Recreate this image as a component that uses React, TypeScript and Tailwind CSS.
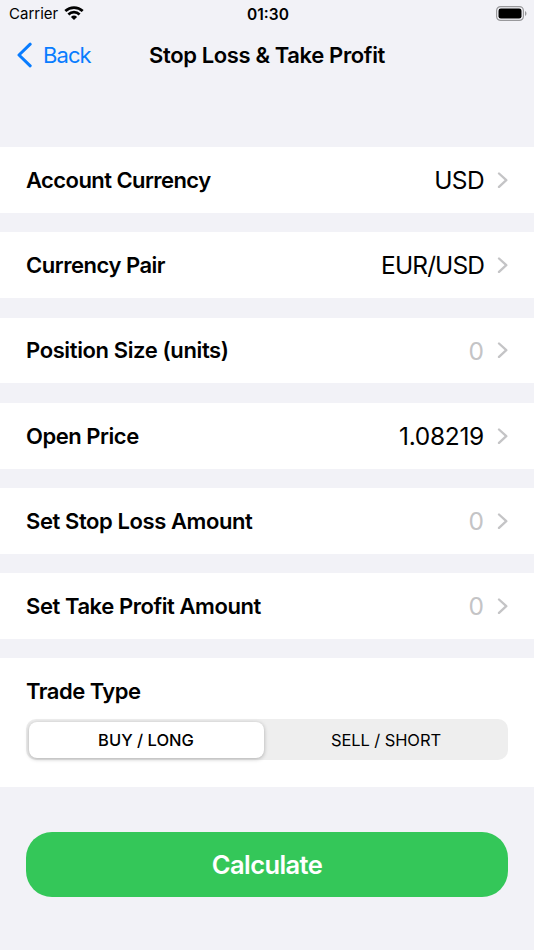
type Row = {
  label: string
  value: string
  labelClass: string
  valueClass: string
}

const rows: Row[] = [
  { label: "Account Currency", value: "USD", labelClass: "tracking-[-0.57px]", valueClass: "tracking-[-0.6px]" },
  { label: "Currency Pair", value: "EUR/USD", labelClass: "tracking-[-0.48px]", valueClass: "tracking-[-0.9px]" },
  { label: "Position Size (units)", value: "0", labelClass: "tracking-[-0.38px]", valueClass: "text-[#c4c4c6]" },
  { label: "Open Price", value: "1.08219", labelClass: "tracking-[-0.46px]", valueClass: "tracking-[-0.3px]" },
  { label: "Set Stop Loss Amount", value: "0", labelClass: "tracking-[-0.41px]", valueClass: "text-[#c4c4c6]" },
  { label: "Set Take Profit Amount", value: "0", labelClass: "tracking-[-0.43px]", valueClass: "text-[#c4c4c6]" },
]

function Chevron() {
  return (
    <svg className="h-4 w-[11px]" viewBox="0 0 11 16" fill="none">
      <path d="M2 1.5 9.3 8.2l-7.3 6.7" stroke="#c4c4c6" strokeWidth="2.3" strokeLinecap="round" strokeLinejoin="round" />
    </svg>
  )
}

function StatusBar() {
  return (
    <div className="grid h-7 grid-cols-3 items-center pl-[9px] pr-[7px]">
      <div className="flex items-center gap-[6px]">
        <span className="text-[15px]">Carrier</span>
        <svg className="h-[14px] w-5 -translate-y-px" viewBox="0 0 20 14" fill="none" stroke="black" strokeWidth="2.7">
          <path d="M1.3 5.1a12.7 12.7 0 0 1 17.4 0M4.4 8.4a8.1 8.1 0 0 1 11.2 0" />
          <path d="M6.9 10.9a4.5 4.5 0 0 1 6.2 0L10 14z" fill="black" stroke="none" />
        </svg>
      </div>
      <span className="pt-px text-center text-[15.5px] font-semibold">01:30</span>
      <svg className="h-[15px] w-[31px] -translate-y-px justify-self-end" viewBox="0 0 31 15">
        <rect x=".6" y=".6" width="26.8" height="13.8" rx="4" fill="none" stroke="#99999c" strokeWidth="1.2" />
        <rect x="2.5" y="2.5" width="23" height="10" rx="2.3" />
        <path d="M29 5c2 1 2 4 0 5z" fill="#99999c" />
      </svg>
    </div>
  )
}

export default function App() {
  return (
    <div className="h-[950px] w-[534px] overflow-hidden bg-[#f2f2f7] font-['Inter',sans-serif] text-black">
      <StatusBar />
      <header className="grid h-[53px] grid-cols-[1fr_auto_1fr] items-center px-4">
        <button className="flex items-center gap-[11px] text-[22px] tracking-[-0.9px] text-[#087cff]">
          <svg className="h-[26px] w-4" viewBox="0 0 16 26" fill="none">
            <path d="M14.2 2.2 3 13l11.2 10.8" stroke="currentColor" strokeWidth="3" strokeLinecap="round" strokeLinejoin="round" />
          </svg>
          <span className="pt-px">Back</span>
        </button>
        <h1 className="pt-px text-[22px] font-semibold tracking-[-0.37px]">Stop Loss & Take Profit</h1>
        <span />
      </header>

      <main className="mt-[66.2px]">
        {rows.map((row) => (
          <div key={row.label} className="mb-[19.4px] flex h-[65.8px] items-center justify-between bg-white px-[26px]">
            <span className={`pt-px text-[22px] font-semibold ${row.labelClass}`}>{row.label}</span>
            <div className="flex items-center gap-[13px]">
              <span className={`pt-px text-[24.5px] ${row.valueClass}`}>{row.value}</span>
              <Chevron />
            </div>
          </div>
        ))}

        <section className="h-[129px] bg-white px-[26px] pt-[19px]">
          <h2 className="text-[22px] font-semibold leading-7 tracking-[-0.5px]">Trade Type</h2>
          <div className="mt-[14px] grid h-[41px] grid-cols-[235px_1fr] gap-[3px] rounded-[10px] bg-[#eeeeee] p-[2.5px] text-[16.5px]">
            <button className="rounded-[8px] bg-white pt-px font-medium shadow-[0_1px_4px_rgba(0,0,0,0.28)]">BUY / LONG</button>
            <button className="pt-px tracking-[-0.1px]">SELL / SHORT</button>
          </div>
        </section>

        <button className="mx-[26px] mt-[45px] h-[65px] w-[482px] rounded-[26px] bg-[#34c759] text-[25.5px] font-semibold tracking-[-0.6px] text-white">
          Calculate
        </button>
      </main>
    </div>
  )
}
